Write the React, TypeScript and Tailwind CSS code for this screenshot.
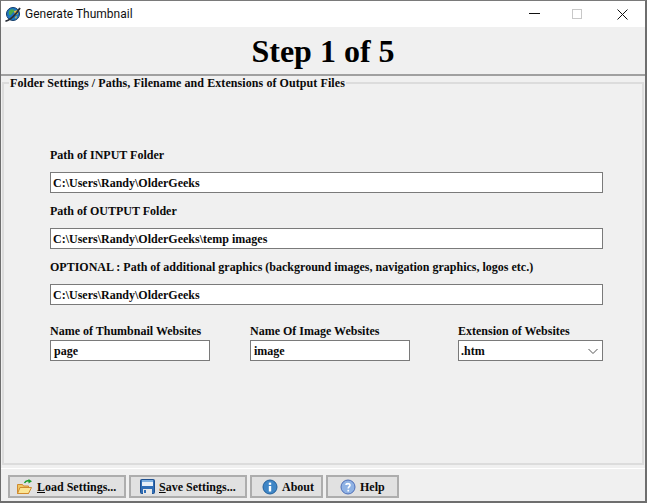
const serif = { fontFamily: '"Liberation Serif", serif' }

function Field({ label, value }: { label: string; value: string }) {
  return (
    <div className="h-[56px]">
      <div className="h-[25px] pt-[1px] text-[12px] leading-[14px]">{label}</div>
      <div className="flex h-[21px] w-[553px] items-center border border-[#7a7a7a] bg-white pl-[2px] text-[12px]">{value}</div>
    </div>
  )
}

function SmallField({ label, value, className }: { label: string; value: string; className: string }) {
  return (
    <div className={className}>
      <div className="h-[16px] text-[12px] leading-[14px]">{label}</div>
      <div className="flex h-[21px] w-[160px] items-center border border-[#7a7a7a] bg-white pl-[3px] text-[12px]">{value}</div>
    </div>
  )
}

function GlobeIcon() {
  return (
    <svg width="17" height="17" viewBox="0 0 17 17" className="ml-[3px] shrink-0">
      <circle cx="9" cy="8" r="6.500" fill="#1c78c4" stroke="#123a66" />
      <path d="M5 5c2-2 4-2 5-1 1 2-2 3-3 5-1 1-3 0-2-4z" fill="#4aa84a" />
      <path d="M10 5l4-1 0 4-3 1z" fill="#e8c23c" />
      <path d="M11 11l2-1-1 3z" fill="#e8c23c" />
      <path d="M1.500 15C5 15 12 9 16 2" fill="none" stroke="#2a2f38" strokeWidth="1.800" />
    </svg>
  )
}

function FolderIcon() {
  return (
    <svg width="17" height="16" viewBox="0 0 17 16" className="shrink-0">
      <path d="M1.500 5.500h5l1 1.500h5V14.500H1.500z" fill="#eec765" stroke="#d08a2e" />
      <path d="M1.500 14.500l2.500-6H15.500l-3 6z" fill="#fbe594" stroke="#d08a2e" />
      <path d="M8.500 4C9.500 2 11 1.500 13 2" fill="none" stroke="#1a9a2a" strokeWidth="1.500" />
      <path d="M12.500 0l3.500 2.200-3.500 2.200z" fill="#1a9a2a" />
    </svg>
  )
}

function SaveIcon() {
  return (
    <svg width="15" height="15" viewBox="0 0 15 15" className="shrink-0">
      <rect x="0.500" y="0.500" width="14" height="14" rx="1" fill="#2f6db5" stroke="#1d4f8f" />
      <rect x="2" y="1" width="11" height="2" fill="#7fb0e0" />
      <rect x="2" y="3" width="11" height="4" fill="#e8f0f8" />
      <rect x="3" y="10" width="9" height="5" fill="#e8e8e8" />
      <rect x="4" y="11" width="2" height="3" fill="#2f6db5" />
    </svg>
  )
}

function AboutIcon() {
  return (
    <svg width="16" height="16" viewBox="0 0 16 16" className="shrink-0">
      <circle cx="8" cy="8" r="7" fill="#3f86c6" stroke="#23609c" />
      <rect x="6.800" y="7" width="2.400" height="5.500" fill="#fff" />
      <rect x="6.800" y="3.600" width="2.400" height="2.200" fill="#fff" />
    </svg>
  )
}

function HelpIcon() {
  return (
    <svg width="16" height="16" viewBox="0 0 16 16" className="shrink-0">
      <circle cx="8" cy="8" r="7" fill="#8fb2e4" stroke="#4f6fb8" />
      <path d="M5.800 5.800C6 4.400 10 4 10 6.200 10 7.800 8.200 7.600 8.200 9.600" fill="none" stroke="#fff" strokeWidth="1.600" />
      <rect x="7.400" y="10.800" width="1.700" height="1.700" fill="#fff" />
    </svg>
  )
}

function ToolButton({ icon, first, rest, className }: { icon: React.ReactNode; first?: string; rest: string; className: string }) {
  return (
    <div className={`flex h-[23px] items-center border-2 border-[#adadad] bg-[#e1e1e1] text-[12px] ${className}`}>
      {icon}
      <span className="ml-[4px]">
        {first && <span className="underline">{first}</span>}
        {rest}
      </span>
    </div>
  )
}

export default function App() {
  return (
    <div style={serif} className="flex h-[503px] w-[647px] flex-col border border-r-2 border-b-2 border-[#6e6e6e] border-t-[#7a7a7a] bg-[#f0f0f0] font-bold text-[#0a0a0a]">
      <div className="flex h-[26px] shrink-0 items-center bg-white">
        <GlobeIcon />
        <span className="ml-[4px] text-[12px] font-normal text-[#111]" style={{ fontFamily: 'Roboto, sans-serif' }}>Generate Thumbnail</span>
        <svg width="12" height="2" viewBox="0 0 12 2" className="ml-auto mr-[31px]"><rect width="11" height="1" fill="#111" /></svg>
        <div className="mr-[35px] h-[10px] w-[10px] border border-[#c8c8c8]" />
        <svg width="11" height="11" viewBox="0 0 11 11" className="mr-[17px]"><path d="M0.500 0.500l10 10M10.500 0.500l-10 10" stroke="#111" /></svg>
      </div>
      <div className="flex h-[49px] shrink-0 items-center justify-center border-b-[2px] border-[#a0a0a0] text-[32px] leading-none text-black">Step 1 of 5</div>
      <fieldset className="mx-[1px] h-[389px] shrink-0 border-2 border-[#dcdcdc] pt-[57px]">
        <legend className="ml-[5px] h-[14px] px-[1px] text-[12px] leading-[15px] tracking-[0.08px]">Folder Settings / Paths, Filename and Extensions of Output Files</legend>
        <div className="pl-[46px]">
          <Field label="Path of INPUT Folder" value="C:\Users\Randy\OlderGeeks" />
          <Field label="Path of OUTPUT Folder" value="C:\Users\Randy\OlderGeeks\temp images" />
          <Field label="OPTIONAL : Path of additional graphics (background images, navigation graphics, logos etc.)" value="C:\Users\Randy\OlderGeeks" />
          <div className="mt-[9px] flex">
            <SmallField className="w-[200px]" label="Name of Thumbnail Websites" value="page" />
            <SmallField className="w-[208px]" label="Name Of Image Websites" value="image" />
            <div className="w-[145px]">
              <div className="h-[16px] text-[12px] leading-[14px]">Extension of Websites</div>
              <div className="flex h-[21px] items-center justify-between border border-[#7a7a7a] bg-white pl-[2px] pr-[3px] text-[12px]">
                .htm
                <svg width="12" height="12" viewBox="0 0 12 12"><path d="M1.500 4l4.500 4.500L10.500 4" fill="none" stroke="#555" /></svg>
              </div>
            </div>
          </div>
        </div>
      </fieldset>
      <div className="mt-[3px] flex flex-1 items-start gap-[3px] border-t border-white pl-[7px] pt-[6px]">
        <ToolButton className="w-[118px] pl-[6px]" icon={<FolderIcon />} first="L" rest="oad Settings..." />
        <ToolButton className="w-[118px] pl-[9px]" icon={<SaveIcon />} first="S" rest="ave Settings..." />
        <ToolButton className="w-[73px] pl-[10px]" icon={<AboutIcon />} rest="About" />
        <ToolButton className="w-[73px] pl-[12px]" icon={<HelpIcon />} rest="Help" />
      </div>
    </div>
  )
}
